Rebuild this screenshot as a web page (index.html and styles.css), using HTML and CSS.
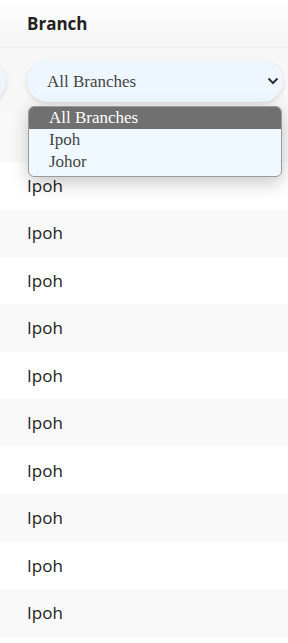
FILE: index.html
```html
<!DOCTYPE html>
<html lang="en">
<head>
    <meta charset="UTF-8">
    <meta name="viewport" content="width=device-width, initial-scale=1.0">
    <title>Branch Filter</title>
    <link rel="stylesheet" href="styles.css">
</head>
<body>
    <div class="table">
        <div class="row head">
            <div class="cell prev"></div>
            <div class="cell">Branch</div>
        </div>
        <div class="row filter">
            <div class="cell prev"><span class="pill"></span></div>
            <div class="cell">
                <div class="select-wrap">
                    <select id="branchFilter">
                        <option value="">All Branches</option>
                        <option value="Ipoh">Ipoh</option>
                        <option value="Johor">Johor</option>
                    </select>
                    <svg class="chevron" width="12" height="8" viewBox="0 0 12 8"><path d="M1.5 1.5 L6 6 L10.5 1.5" fill="none" stroke="#333" stroke-width="2"/></svg>
                    <ul class="options">
                        <li class="selected">All Branches</li>
                        <li>Ipoh</li>
                        <li>Johor</li>
                    </ul>
                </div>
            </div>
        </div>
        <div class="row"><div class="cell prev"></div><div class="cell">Ipoh</div></div>
        <div class="row"><div class="cell prev"></div><div class="cell">Ipoh</div></div>
        <div class="row"><div class="cell prev"></div><div class="cell">Ipoh</div></div>
        <div class="row"><div class="cell prev"></div><div class="cell">Ipoh</div></div>
        <div class="row"><div class="cell prev"></div><div class="cell">Ipoh</div></div>
        <div class="row"><div class="cell prev"></div><div class="cell">Ipoh</div></div>
        <div class="row"><div class="cell prev"></div><div class="cell">Ipoh</div></div>
        <div class="row"><div class="cell prev"></div><div class="cell">Ipoh</div></div>
        <div class="row"><div class="cell prev"></div><div class="cell">Ipoh</div></div>
        <div class="row"><div class="cell prev"></div><div class="cell">Ipoh</div></div>
        <div class="row"><div class="cell prev"></div><div class="cell">Ipoh</div></div>
    </div>
</body>
</html>
```
FILE: styles.css
```css
body { margin: 0; font-family: "Open Sans", "Noto Sans", sans-serif; color: #222; background: #fff; overflow: hidden; }
.table { display: flex; flex-direction: column; }
.row { display: flex; height: 47.5px; align-items: center; font-size: 17px; }
.row:nth-child(odd) { background: #f9f9f9; }
.row:nth-child(even) { background: #fff; }
.cell { flex: 1; padding: 0 5px 0 12px; }
.cell.prev { flex: 0 0 15px; padding: 0; overflow: hidden; display: flex; justify-content: flex-end; }
.head { height: 47px; font-weight: 700; background: linear-gradient(#fff, #f5f5f5) !important; border-bottom: 1px solid #eee; }
.filter { height: 66px; background: #f7f7f7 !important; }
.pill { flex: 0 0 100px; height: 42px; margin-right: 9px; border-radius: 21px; background: #eef6ff; box-shadow: 0 2px 5px rgba(0, 0, 0, 0.12); }
.select-wrap { position: relative; }
select { appearance: none; -webkit-appearance: none; width: 100%; height: 42px; padding: 0 30px 0 20px; border: none; border-radius: 21px; background: #eef6ff; box-shadow: 0 2px 5px rgba(0, 0, 0, 0.12); font-family: "Liberation Serif", serif; font-size: 17px; color: #444; }
.chevron { position: absolute; right: 4px; top: 17px; }
.options { position: absolute; left: 1px; right: 1px; top: 46px; margin: 0; padding: 0 0 3px; list-style: none; background: #f0f8ff; border: 1px solid #9a9a9a; border-radius: 6px; overflow: hidden; box-shadow: 0 6px 18px rgba(0, 0, 0, 0.22); font-family: "Liberation Serif", serif; font-size: 17px; color: #444; z-index: 2; }
.options li { height: 22px; line-height: 22px; padding-left: 20px; }
.options li.selected { background: #707070; color: #fff; }
```
